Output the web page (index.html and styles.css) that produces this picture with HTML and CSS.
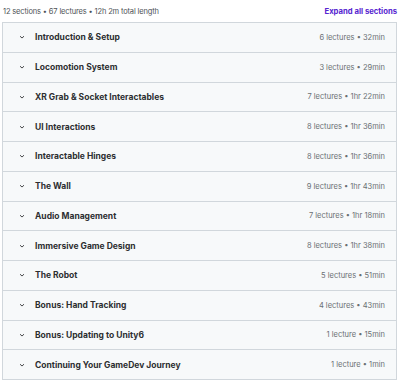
FILE: index.html
```html
<!DOCTYPE html>
<html>
<head>
<meta charset="utf-8">
<link rel="stylesheet" href="styles.css">
</head>
<body>
<div class="page">
  <div class="top">
    <span class="meta">12 sections • 67 lectures • 12h 2m total length</span>
    <span class="expand">Expand all sections</span>
  </div>
  <div class="list">
    <div class="row"><span class="chev"><svg viewBox="0 0 10 10" width="8" height="8"><path d="M2.5 4 L5 6.3 L7.5 4" fill="none" stroke="#2d2f31" stroke-width="1.1"/></svg></span><span class="title">Introduction &amp; Setup</span><span class="info">6 lectures • 32min</span></div>
    <div class="row"><span class="chev"><svg viewBox="0 0 10 10" width="8" height="8"><path d="M2.5 4 L5 6.3 L7.5 4" fill="none" stroke="#2d2f31" stroke-width="1.1"/></svg></span><span class="title">Locomotion System</span><span class="info">3 lectures • 29min</span></div>
    <div class="row"><span class="chev"><svg viewBox="0 0 10 10" width="8" height="8"><path d="M2.5 4 L5 6.3 L7.5 4" fill="none" stroke="#2d2f31" stroke-width="1.1"/></svg></span><span class="title">XR Grab &amp; Socket Interactables</span><span class="info">7 lectures • 1hr 22min</span></div>
    <div class="row"><span class="chev"><svg viewBox="0 0 10 10" width="8" height="8"><path d="M2.5 4 L5 6.3 L7.5 4" fill="none" stroke="#2d2f31" stroke-width="1.1"/></svg></span><span class="title">UI Interactions</span><span class="info">8 lectures • 1hr 36min</span></div>
    <div class="row"><span class="chev"><svg viewBox="0 0 10 10" width="8" height="8"><path d="M2.5 4 L5 6.3 L7.5 4" fill="none" stroke="#2d2f31" stroke-width="1.1"/></svg></span><span class="title">Interactable Hinges</span><span class="info">8 lectures • 1hr 36min</span></div>
    <div class="row"><span class="chev"><svg viewBox="0 0 10 10" width="8" height="8"><path d="M2.5 4 L5 6.3 L7.5 4" fill="none" stroke="#2d2f31" stroke-width="1.1"/></svg></span><span class="title">The Wall</span><span class="info">9 lectures • 1hr 43min</span></div>
    <div class="row"><span class="chev"><svg viewBox="0 0 10 10" width="8" height="8"><path d="M2.5 4 L5 6.3 L7.5 4" fill="none" stroke="#2d2f31" stroke-width="1.1"/></svg></span><span class="title">Audio Management</span><span class="info">7 lectures • 1hr 18min</span></div>
    <div class="row"><span class="chev"><svg viewBox="0 0 10 10" width="8" height="8"><path d="M2.5 4 L5 6.3 L7.5 4" fill="none" stroke="#2d2f31" stroke-width="1.1"/></svg></span><span class="title">Immersive Game Design</span><span class="info">8 lectures • 1hr 38min</span></div>
    <div class="row"><span class="chev"><svg viewBox="0 0 10 10" width="8" height="8"><path d="M2.5 4 L5 6.3 L7.5 4" fill="none" stroke="#2d2f31" stroke-width="1.1"/></svg></span><span class="title">The Robot</span><span class="info">5 lectures • 51min</span></div>
    <div class="row"><span class="chev"><svg viewBox="0 0 10 10" width="8" height="8"><path d="M2.5 4 L5 6.3 L7.5 4" fill="none" stroke="#2d2f31" stroke-width="1.1"/></svg></span><span class="title">Bonus: Hand Tracking</span><span class="info">4 lectures • 43min</span></div>
    <div class="row"><span class="chev"><svg viewBox="0 0 10 10" width="8" height="8"><path d="M2.5 4 L5 6.3 L7.5 4" fill="none" stroke="#2d2f31" stroke-width="1.1"/></svg></span><span class="title">Bonus: Updating to Unity6</span><span class="info">1 lecture • 15min</span></div>
    <div class="row"><span class="chev"><svg viewBox="0 0 10 10" width="8" height="8"><path d="M2.5 4 L5 6.3 L7.5 4" fill="none" stroke="#2d2f31" stroke-width="1.1"/></svg></span><span class="title">Continuing Your GameDev Journey</span><span class="info">1 lecture • 1min</span></div>
  </div>
</div>
</body>
</html>
```

FILE: styles.css
```css
html, body {
  margin: 0;
  padding: 0;
  background: #ffffff;
}
body {
  font-family: Inter, "Noto Sans", sans-serif;
  color: #2d2f31;
}
.page {
  padding: 0 3px 0 2px;
}
.top {
  height: 22px;
  display: flex;
  align-items: center;
  justify-content: space-between;
  padding-left: 1px;
}
.meta {
  font-size: 7.5px;
  color: #4d5155;
  letter-spacing: -0.15px;
}
.expand {
  font-size: 7.7px;
  font-weight: 700;
  color: #5624d0;
}
.list {
  border: 1px solid #d1d7dc;
  border-bottom: none;
}
.row {
  height: 28.75px;
  display: flex;
  align-items: center;
  background: #f7f9fa;
  border-bottom: 1px solid #d1d7dc;
  padding: 0 11px 0 15px;
}
.chev {
  width: 8px;
  height: 8px;
  display: flex;
  margin-right: 9px;
}
.title {
  flex: 1;
  font-size: 8.5px;
  font-weight: 700;
  color: #2d2f31;
}
.info {
  font-size: 7.5px;
  color: #6a6f73;
}
```
